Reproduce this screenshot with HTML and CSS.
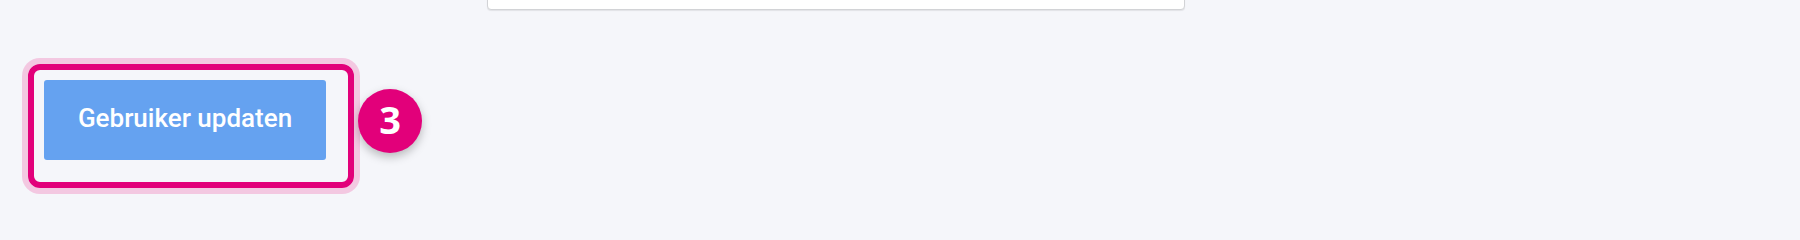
FILE: index.html
```html
<!DOCTYPE html>
<html lang="nl">
<head>
<meta charset="utf-8">
<title>Gebruiker updaten</title>
<link rel="stylesheet" href="styles.css">
</head>
<body>
<div class="page">
  <div class="field-row">
    <div class="field"></div>
  </div>
  <div class="actions">
    <div class="highlight">
      <button class="btn-primary" type="button">Gebruiker updaten</button>
      <span class="step-badge">3</span>
    </div>
  </div>
</div>
</body>
</html>
```
FILE: styles.css
```css
html, body {
  margin: 0;
  padding: 0;
  background: #f5f6fa;
  font-family: Roboto, "Liberation Sans", sans-serif;
}

.page {
  width: 1800px;
  height: 240px;
  overflow: hidden;
}

.field-row {
  padding-left: 487px;
}

.field {
  width: 696px;
  height: 40px;
  margin-top: -32px;
  background: #ffffff;
  border: 1px solid #d2d3d6;
  border-radius: 4px;
  box-shadow: 0 1px 1px rgba(0, 0, 0, 0.08);
}

.actions {
  padding: 54px 0 0 28px;
}

.highlight {
  position: relative;
  display: inline-flex;
  padding: 10px 22px 22px 10px;
  border: 6px solid #e2007a;
  border-radius: 12px;
  box-shadow: 0 0 0 6px #f3c8e1;
}

.btn-primary {
  width: 282px;
  height: 80px;
  border: none;
  outline: none;
  border-radius: 3px;
  background: #65a2f0;
  color: #ffffff;
  font-family: Roboto, "Liberation Sans", sans-serif;
  font-weight: 500;
  font-size: 26px;
  padding: 0 0 4px 0;
  cursor: pointer;
}

.step-badge {
  position: absolute;
  left: calc(100% + 10px);
  top: 19px;
  width: 64px;
  height: 64px;
  border-radius: 50%;
  background: #e2007a;
  color: #ffffff;
  display: flex;
  align-items: center;
  justify-content: center;
  font-family: "Open Sans", "Noto Sans", sans-serif;
  font-weight: 700;
  font-size: 38px;
  line-height: 1;
  padding-bottom: 5px;
  box-sizing: border-box;
  box-shadow: 0 4px 10px rgba(0, 0, 0, 0.25);
}
```
